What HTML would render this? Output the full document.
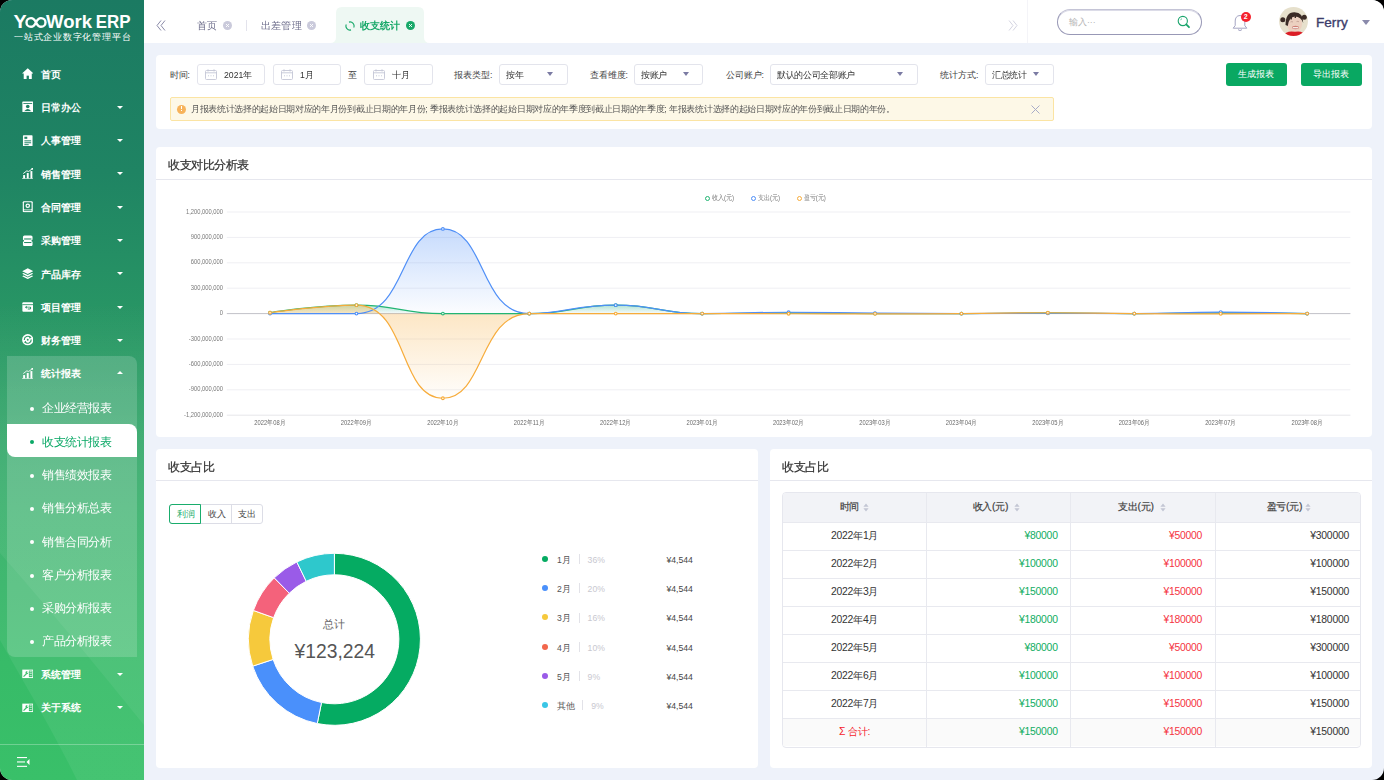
<!DOCTYPE html>
<html><head><meta charset="utf-8">
<style>
*{box-sizing:border-box;margin:0;padding:0}
html,body{width:1384px;height:780px;overflow:hidden;background:#000}
body{font-family:"Liberation Sans",sans-serif;color:#333}
.app{position:absolute;left:0;top:0;width:1384px;height:780px;border-radius:12px;overflow:hidden;background:#eef2fa}
.abs{position:absolute}
.t{position:absolute;white-space:nowrap;line-height:1}
/* sidebar */
.side{position:absolute;left:0;top:0;width:144px;height:780px;background:linear-gradient(180deg,#1b7a62 0%,#1f8463 22%,#2a9a65 45%,#31ad66 65%,#37bb68 85%,#39c069 100%);overflow:hidden}
.logo{position:absolute;left:14px;top:12.4px;font-size:19.4px;font-weight:bold;color:#fff;letter-spacing:-1.2px;line-height:1}
.sub{position:absolute;left:14px;top:32.5px;font-size:9.2px;color:#fff;letter-spacing:0.78px;line-height:1}
.mi{position:absolute;left:0;width:144px;height:33px}
.mi .ic{position:absolute;left:21.5px;top:10.6px;width:11.5px;height:11.5px}
.mi .lb{position:absolute;left:41px;top:12.3px;font-size:10.1px;color:#fff;font-weight:600;line-height:1;white-space:nowrap}
.mi .ar{position:absolute;left:117px;top:15px;width:0;height:0;border-left:3px solid transparent;border-right:3px solid transparent;border-top:3.5px solid #fff}
.mi .arup{border-top:none;border-bottom:3.5px solid #fff;top:14px}
.grp{position:absolute;left:7px;top:356px;width:130px;height:301px;background:rgba(255,255,255,0.17);border-radius:0 8px 0 8px}
.si{position:absolute;left:0;width:144px;height:33px}
.si .dot{position:absolute;left:30px;top:16.6px;width:4px;height:4px;border-radius:50%;background:#fff}
.si .lb{position:absolute;left:42px;top:11.9px;font-size:12px;transform:scale(0.965);transform-origin:0 0;color:#fff;line-height:1;white-space:nowrap}
.si.act .bg{position:absolute;left:7px;top:0.6px;width:130px;height:33px;background:#fff;border-radius:0 8px 0 8px}
.si.act .dot{background:#0aa866}
.si.act .lb{color:#0aa866}
/* header */
.hdr{position:absolute;left:144px;top:0;width:1240px;height:43px;background:#fff}
/* cards */
.card{position:absolute;background:#fff;border-radius:4px}
.ctitle{position:absolute;left:12px;font-size:12px;transform:scale(0.96);transform-origin:0 0;color:#333;-webkit-text-stroke:0.25px #333;line-height:1;white-space:nowrap}
.inp{position:absolute;top:64px;height:21px;border:1px solid #e3e4ec;border-radius:3px;background:#fff}
.lbl{position:absolute;top:70.5px;font-size:8.65px;color:#444;line-height:1;white-space:nowrap}
.itx{position:absolute;top:70.8px;font-size:9px;transform:scale(0.963);transform-origin:0 0;color:#333;line-height:1;white-space:nowrap}
.sar{position:absolute;top:72px;width:0;height:0;border-left:3.9px solid transparent;border-right:3.9px solid transparent;border-top:4.8px solid #7b7ba3}
.btn{position:absolute;top:63px;width:61px;height:23px;background:#09a862;border-radius:3px;color:#fff;font-size:8.65px;line-height:23px;text-align:center}
.yl{position:absolute;left:163px;width:60px;text-align:right;font-size:5.8px;color:#7a7a7a;line-height:8px;white-space:nowrap;transform:scaleY(1.3);transform-origin:right center}
.xl{position:absolute;top:417.8px;width:60px;text-align:center;font-size:5.8px;color:#6a6a6a;line-height:8px;white-space:nowrap;transform:scaleY(1.25)}
.lg{position:absolute;top:194.2px;font-size:6.1px;color:#7a7a7a;line-height:8px;white-space:nowrap;transform:scaleY(1.15)}
.lgd{position:absolute;top:195.8px;width:5px;height:5px;border-radius:50%;border:1.2px solid}
/* legend list */
.lr{position:absolute;left:542px;width:160px;height:14px}
.lr .d{position:absolute;left:0;top:3.3px;width:6px;height:6px;border-radius:50%}
.lr .m{position:absolute;left:15px;top:3.4px;font-size:8.65px;color:#555;line-height:1;white-space:nowrap}
.lr .s{position:absolute;top:1.6px;width:1px;height:10px;background:#e2e2e8}
.lr .p{position:absolute;top:3.4px;font-size:8.65px;color:#c8c8d0;line-height:1;white-space:nowrap}
.lr .v{position:absolute;right:10px;top:3.4px;font-size:8.65px;color:#444;line-height:1;white-space:nowrap}
/* table */
.tbl{position:absolute;left:782px;top:492.5px;width:579px;height:254px;border:1px solid #e6e7ee;border-radius:4px;overflow:hidden}
.th{position:absolute;top:0;height:28.8px;background:#f2f3f7}
.row{position:absolute;left:0;width:579px;height:28.1px;border-top:1px solid #e8e9ef}
.cell{position:absolute;top:0;height:28px;line-height:28px;font-size:10.4px;color:#333;white-space:nowrap;letter-spacing:-0.25px}
.vl{position:absolute;top:0;width:1px;height:256px;background:#e8e9ef}
</style></head>
<body><div class="app">

<!-- SIDEBAR -->
<div class="side">
  <svg class="abs" style="left:0;top:0" width="144" height="780"><defs><linearGradient id="sov" gradientUnits="userSpaceOnUse" x1="0" y1="300" x2="0" y2="780"><stop offset="0" stop-color="#fff" stop-opacity="0"/><stop offset="0.3" stop-color="#fff" stop-opacity="0.06"/><stop offset="1" stop-color="#fff" stop-opacity="0.06"/></linearGradient><linearGradient id="sov2" gradientUnits="userSpaceOnUse" x1="0" y1="300" x2="0" y2="780"><stop offset="0" stop-color="#fff" stop-opacity="0"/><stop offset="0.35" stop-color="#fff" stop-opacity="0.055"/><stop offset="1" stop-color="#fff" stop-opacity="0.055"/></linearGradient></defs>
<path d="M0,300 L0,640 C22,680 50,725 77,780 L144,780 L144,300 Z" fill="url(#sov)"/>
<path d="M0,300 L0,553 C50,610 100,670 144,725 L144,300 Z" fill="url(#sov2)"/></svg>
  <svg class="abs" style="left:0;top:0" width="144" height="44"><g fill="#fff" font-family="Liberation Sans, sans-serif" font-weight="bold" font-size="18.8">
<text x="13.6" y="27.8" textLength="13.2" lengthAdjust="spacingAndGlyphs">Y</text>
<text x="46" y="27.8" textLength="46" lengthAdjust="spacingAndGlyphs">Work</text>
<text x="95.8" y="27.8" textLength="34.8" lengthAdjust="spacingAndGlyphs">ERP</text></g>
<path d="M36,22.4 C37.4,19.4 38.8,18.1 41,18.1 C43.6,18.1 45.5,20 45.5,22.4 C45.5,24.8 43.6,26.8 41,26.8 C38.8,26.8 37.4,25.4 36,22.4 C34.6,19.4 33.2,18.1 31,18.1 C28.4,18.1 26.5,20 26.5,22.4 C26.5,24.8 28.4,26.8 31,26.8 C33.2,26.8 34.6,25.4 36,22.4 Z" stroke="#fff" stroke-width="2.4" fill="none"/></svg>
  <div class="sub">一站式企业数字化管理平台</div>
<div class="mi" style="top:57.5px"><svg class="ic" viewBox="0 0 12 12"><defs><mask id="mh"><rect width="12" height="12" fill="#000"/><path d="M6 0.2 L12 5.7 L10.2 5.7 L10.2 11.6 L1.8 11.6 L1.8 5.7 L0 5.7 Z" fill="#fff"/><rect x="4.8" y="8" width="2.4" height="3.8" fill="#000"/></mask></defs><rect width="12" height="12" fill="#fff" mask="url(#mh)"/></svg><div class="lb">首页</div></div>
<div class="mi" style="top:90.8px"><svg class="ic" viewBox="0 0 12 12"><defs><mask id="mo"><rect width="12" height="12" fill="#000"/><rect x="0.4" y="0.6" width="11.2" height="11" rx="0.6" fill="#fff"/><rect x="1.4" y="2.1" width="9.2" height="0.9" fill="#000"/><circle cx="6" cy="5.7" r="1.9" fill="#000"/><path d="M2.6 10.4 Q6 6.4 9.4 10.4 Z" fill="#000"/><rect x="2.2" y="10.4" width="7.6" height="0.2" fill="#000"/></mask></defs><rect width="12" height="12" fill="#fff" mask="url(#mo)"/></svg><div class="lb">日常办公</div><div class="ar"></div></div>
<div class="mi" style="top:124.1px"><svg class="ic" viewBox="0 0 12 12"><defs><mask id="mr"><rect width="12" height="12" fill="#000"/><rect x="1" y="0.2" width="10" height="11.6" rx="0.8" fill="#fff"/><rect x="2.5" y="1.8" width="3" height="2.2" fill="#000"/><rect x="2.5" y="5.6" width="7" height="1" fill="#000"/><rect x="2.5" y="7.6" width="7" height="1" fill="#000"/><rect x="2.5" y="9.6" width="4.5" height="1" fill="#000"/></mask></defs><rect width="12" height="12" fill="#fff" mask="url(#mr)"/></svg><div class="lb">人事管理</div><div class="ar"></div></div>
<div class="mi" style="top:157.4px"><svg class="ic" viewBox="0 0 12 12"><defs><mask id="ms"><rect width="12" height="12" fill="#000"/><rect x="0" y="10.9" width="12" height="1.1" fill="#fff"/><rect x="1.2" y="7.4" width="2" height="3.5" fill="#fff"/><rect x="5" y="5.2" width="2" height="5.7" fill="#fff"/><rect x="8.8" y="3.2" width="2" height="7.7" fill="#fff"/><path d="M1.3 5.8 L5 3 L7 3.6 L10.6 0.9" stroke="#fff" stroke-width="1" fill="none"/><circle cx="10.8" cy="0.9" r="1" fill="#fff"/></mask></defs><rect width="12" height="12" fill="#fff" mask="url(#ms)"/></svg><div class="lb">销售管理</div><div class="ar"></div></div>
<div class="mi" style="top:190.7px"><svg class="ic" viewBox="0 0 12 12"><defs><mask id="mc"><rect width="12" height="12" fill="#000"/><rect x="0.8" y="0.2" width="10.4" height="11.6" rx="1.2" fill="#fff"/><rect x="2" y="1.4" width="8" height="7.4" rx="0.6" fill="#000"/><rect x="2" y="9.7" width="8" height="0.8" fill="#000"/><circle cx="6" cy="5" r="2.4" fill="#fff"/><circle cx="6" cy="5" r="1.1" fill="#000"/></mask></defs><rect width="12" height="12" fill="#fff" mask="url(#mc)"/></svg><div class="lb">合同管理</div><div class="ar"></div></div>
<div class="mi" style="top:224.0px"><svg class="ic" viewBox="0 0 12 12"><defs><mask id="mp"><rect width="12" height="12" fill="#000"/><rect x="1" y="0.4" width="10" height="11.2" rx="1.6" fill="#fff"/><rect x="2.2" y="3.6" width="7.6" height="1.1" fill="#000"/><rect x="2.2" y="7.3" width="7.6" height="1.1" fill="#000"/><circle cx="11" cy="6" r="1.1" fill="#000"/><circle cx="1" cy="6" r="1.1" fill="#000"/></mask></defs><rect width="12" height="12" fill="#fff" mask="url(#mp)"/></svg><div class="lb">采购管理</div><div class="ar"></div></div>
<div class="mi" style="top:257.3px"><svg class="ic" viewBox="0 0 12 12"><defs><mask id="mk"><rect width="12" height="12" fill="#000"/><path d="M6 0.3 L11.8 3.3 L6 6.3 L0.2 3.3 Z" fill="#fff"/><path d="M0.2 5.9 L1.6 5.1 L6 7.4 L10.4 5.1 L11.8 5.9 L6 9 Z" fill="#fff"/><path d="M0.2 8.5 L1.6 7.7 L6 10 L10.4 7.7 L11.8 8.5 L6 11.6 Z" fill="#fff"/></mask></defs><rect width="12" height="12" fill="#fff" mask="url(#mk)"/></svg><div class="lb">产品库存</div><div class="ar"></div></div>
<div class="mi" style="top:290.6px"><svg class="ic" viewBox="0 0 12 12"><defs><mask id="mj"><rect width="12" height="12" fill="#000"/><rect x="0.4" y="1.3" width="11.2" height="9.8" rx="1" fill="#fff"/><rect x="0.4" y="3.4" width="11.2" height="0.9" fill="#000"/><path d="M3 6.6 L5 5 L5 6 L8.4 6 Q9.6 6 9.6 7.4 Q9.6 8.8 8.4 8.8 L6 8.8 L6 7.9 L8.2 7.9 Q8.6 7.9 8.6 7.4 Q8.6 6.9 8.2 6.9 L5 6.9 L5 8.1 Z" fill="#000"/></mask></defs><rect width="12" height="12" fill="#fff" mask="url(#mj)"/></svg><div class="lb">项目管理</div><div class="ar"></div></div>
<div class="mi" style="top:323.9px"><svg class="ic" viewBox="0 0 12 12"><defs><mask id="mf"><rect width="12" height="12" fill="#000"/><circle cx="6" cy="6" r="5.9" fill="#fff"/><path d="M2.4 6.2 A3.6 3.6 0 0 1 8.7 3.6" stroke="#000" stroke-width="1.2" fill="none"/><path d="M9.6 5.8 A3.6 3.6 0 0 1 3.3 8.4" stroke="#000" stroke-width="1.2" fill="none"/><path d="M7.4 2.2 L10 3.4 L7.9 5 Z" fill="#000"/><path d="M4.6 9.8 L2 8.6 L4.1 7 Z" fill="#000"/><circle cx="6" cy="6" r="1" fill="#000"/></mask></defs><rect width="12" height="12" fill="#fff" mask="url(#mf)"/></svg><div class="lb">财务管理</div><div class="ar"></div></div>
<div class="grp"></div>
<div class="mi" style="top:357.2px"><svg class="ic" viewBox="0 0 12 12"><defs><mask id="mt"><rect width="12" height="12" fill="#000"/><rect x="0" y="10.9" width="12" height="1.1" fill="#fff"/><rect x="1.2" y="7.4" width="2" height="3.5" fill="#fff"/><rect x="5" y="5.2" width="2" height="5.7" fill="#fff"/><rect x="8.8" y="3.2" width="2" height="7.7" fill="#fff"/><path d="M1.3 5.8 L5 3 L7 3.6 L10.6 0.9" stroke="#fff" stroke-width="0.9" fill="none"/><circle cx="10.8" cy="0.9" r="1" fill="#fff"/></mask></defs><rect width="12" height="12" fill="#fff" mask="url(#mt)"/></svg><div class="lb">统计报表</div><div class="ar arup"></div></div>
<div class="si" style="top:390.5px"><div class="dot"></div><div class="lb">企业经营报表</div></div>
<div class="si act" style="top:423.8px"><div class="bg"></div><div class="dot"></div><div class="lb">收支统计报表</div></div>
<div class="si" style="top:457.1px"><div class="dot"></div><div class="lb">销售绩效报表</div></div>
<div class="si" style="top:490.4px"><div class="dot"></div><div class="lb">销售分析总表</div></div>
<div class="si" style="top:523.7px"><div class="dot"></div><div class="lb">销售合同分析</div></div>
<div class="si" style="top:557.0px"><div class="dot"></div><div class="lb">客户分析报表</div></div>
<div class="si" style="top:590.3px"><div class="dot"></div><div class="lb">采购分析报表</div></div>
<div class="si" style="top:623.6px"><div class="dot"></div><div class="lb">产品分析报表</div></div>
<div class="mi" style="top:657.8px"><svg class="ic" viewBox="0 0 12 12"><defs><mask id="my0"><rect width="12" height="12" fill="#000"/><rect x="0.3" y="1.7" width="11.4" height="8.8" fill="#fff"/><rect x="7.2" y="2.7" width="3.6" height="6.8" fill="#000"/><path d="M1.6 9 L4.6 6" stroke="#000" stroke-width="1.2"/><circle cx="5.1" cy="5" r="1.5" fill="#000"/><path d="M4.8 3.6 L6.2 3.6 L6.2 5" stroke="#fff" stroke-width="0"/><rect x="7.8" y="3.6" width="2.4" height="0.8" fill="#fff"/><rect x="7.8" y="5.6" width="2.4" height="0.6" fill="#fff"/><rect x="7.8" y="7.4" width="2.4" height="0.6" fill="#fff"/><circle cx="5.9" cy="4.3" r="0.8" fill="#fff"/></mask></defs><rect width="12" height="12" fill="#fff" mask="url(#my0)"/></svg><div class="lb">系统管理</div><div class="ar"></div></div>
<div class="mi" style="top:691.1px"><svg class="ic" viewBox="0 0 12 12"><defs><mask id="my1"><rect width="12" height="12" fill="#000"/><rect x="0.3" y="1.7" width="11.4" height="8.8" fill="#fff"/><rect x="7.2" y="2.7" width="3.6" height="6.8" fill="#000"/><path d="M1.6 9 L4.6 6" stroke="#000" stroke-width="1.2"/><circle cx="5.1" cy="5" r="1.5" fill="#000"/><path d="M4.8 3.6 L6.2 3.6 L6.2 5" stroke="#fff" stroke-width="0"/><rect x="7.8" y="3.6" width="2.4" height="0.8" fill="#fff"/><rect x="7.8" y="5.6" width="2.4" height="0.6" fill="#fff"/><rect x="7.8" y="7.4" width="2.4" height="0.6" fill="#fff"/><circle cx="5.9" cy="4.3" r="0.8" fill="#fff"/></mask></defs><rect width="12" height="12" fill="#fff" mask="url(#my1)"/></svg><div class="lb">关于系统</div><div class="ar"></div></div>
<div class="abs" style="left:0;top:744px;width:144px;height:1px;background:rgba(255,255,255,0.28)"></div>
<svg class="abs" style="left:16px;top:756px" width="16" height="12" viewBox="0 0 16 12"><rect x="1" y="1" width="10" height="1.1" fill="#fff"/><rect x="1" y="5.4" width="8" height="1.1" fill="#fff"/><rect x="1" y="9.8" width="10" height="1.1" fill="#fff"/><path d="M13.5 3 L10.5 6 L13.5 9Z" fill="#fff"/></svg>
</div>

<!-- HEADER -->

<div class="hdr">
  <svg class="abs" style="left:12px;top:20px" width="10" height="11" viewBox="0 0 10 11"><path d="M5 0.5 L1 5.5 L5 10.5 M9 0.5 L5 5.5 L9 10.5" stroke="#8a8aa8" stroke-width="1" fill="none"/></svg>
  <div class="t" style="left:53px;top:20.6px;font-size:11px;color:#6e6e8c;transform:scale(0.91);transform-origin:0 0">首页</div>
  <div class="abs" style="left:78.5px;top:20.5px;width:9px;height:9px;border-radius:50%;background:#cacadb"></div>
  <svg class="abs" style="left:78.5px;top:20.5px" width="9" height="9"><path d="M3 3 L6 6 M6 3 L3 6" stroke="#fff" stroke-width="0.9"/></svg>
  <div class="abs" style="left:102px;top:19.5px;width:1px;height:11px;background:#e3e3ec"></div>
  <div class="t" style="left:116.8px;top:20.6px;font-size:11px;color:#6e6e8c;transform:scale(0.93);transform-origin:0 0">出差管理</div>
  <div class="abs" style="left:163px;top:20.5px;width:9px;height:9px;border-radius:50%;background:#cacadb"></div>
  <svg class="abs" style="left:163px;top:20.5px" width="9" height="9"><path d="M3 3 L6 6 M6 3 L3 6" stroke="#fff" stroke-width="0.9"/></svg>
  <svg class="abs" style="left:186px;top:7px" width="100" height="36" viewBox="0 0 100 36"><path d="M0 36 Q6 36 6 30 L6 6 Q6 0 12 0 L88 0 Q94 0 94 6 L94 30 Q94 36 100 36 Z" fill="#eef8f3"/></svg>
  <svg class="abs" style="left:200.5px;top:20.5px" width="10" height="10" viewBox="0 0 10 10"><path d="M4 1.1 A4 4 0 0 1 8.7 6.6" stroke="#17a868" stroke-width="1.1" fill="none"/><path d="M6 8.9 A4 4 0 0 1 1.3 3.4" stroke="#17a868" stroke-width="1.1" fill="none"/></svg>
  <div class="t" style="left:216px;top:20.6px;font-size:11px;color:#17a868;font-weight:bold;transform:scale(0.91);transform-origin:0 0">收支统计</div>
  <div class="abs" style="left:262px;top:20.5px;width:9px;height:9px;border-radius:50%;background:#17a868"></div>
  <svg class="abs" style="left:262px;top:20.5px" width="9" height="9"><path d="M3 3 L6 6 M6 3 L3 6" stroke="#fff" stroke-width="0.9"/></svg>
  <svg class="abs" style="left:864px;top:20px" width="10" height="11" viewBox="0 0 10 11"><path d="M1 0.5 L5 5.5 L1 10.5 M5 0.5 L9 5.5 L5 10.5" stroke="#d4d4e2" stroke-width="1" fill="none"/></svg>
  <div class="abs" style="left:883px;top:0;width:1px;height:43px;background:#f4f4f8"></div>
  <div class="abs" style="left:913px;top:8.8px;width:145px;height:26px;border:1px solid #9898b6;border-top-color:#c4c4d6;border-radius:13px;box-shadow:inset 0 1px 0 #dcdce8"></div>
  <div class="t" style="left:925px;top:18px;font-size:8.65px;color:#b4b4b4">输入···</div>
  <svg class="abs" style="left:1033px;top:15px" width="14" height="14" viewBox="0 0 14 14"><circle cx="5.8" cy="6" r="4.6" stroke="#1aa56c" stroke-width="1.1" fill="none"/><path d="M9.2 9.4 L12 12.2" stroke="#1aa56c" stroke-width="1.8" stroke-linecap="round"/><path d="M3.5 5.2 A2.4 2.4 0 0 1 5 3.6" stroke="#1aa56c" stroke-width="0.6" fill="none"/></svg>
  <svg class="abs" style="left:1088px;top:14px" width="16" height="18" viewBox="0 0 16 18"><path d="M8 1.5 C4.6 1.5 3.2 4.2 3.2 7 L3.2 11.6 L1.2 14.2 L14.8 14.2 L12.8 11.6 L12.8 7 C12.8 4.2 11.4 1.5 8 1.5 Z" stroke="#a4a4c2" stroke-width="1" fill="none"/><path d="M6 15.6 Q8 17.6 10 15.6" stroke="#a4a4c2" stroke-width="1" fill="none"/></svg>
  <div class="abs" style="left:1096.5px;top:11.5px;width:10.5px;height:10.5px;border-radius:50%;background:#f5222d;color:#fff;font-size:7px;line-height:10.5px;text-align:center;font-weight:bold">2</div>
  <svg class="abs" style="left:1135px;top:7px" width="29" height="29" viewBox="0 0 29 29"><defs><clipPath id="av"><circle cx="14.5" cy="14.5" r="14.4"/></clipPath></defs><g clip-path="url(#av)"><rect width="29" height="29" fill="#e6e0cc"/><ellipse cx="15.5" cy="17" rx="7.6" ry="8.6" fill="#ecd0c0"/><path d="M6.5 18 Q6.5 5 15.5 5.2 Q24.5 5.4 24.2 16 Q22 10 16 9.6 Q10 9.8 8.8 19 Z" fill="#3b2b26"/><path d="M12 6 L11.4 12.5 L12.8 12.5 L13.6 6.5Z M15.8 6 L15.6 11 L17 11 L17 6Z" fill="#3b2b26"/><circle cx="3.8" cy="12.8" r="2.5" fill="#3b2b26"/><circle cx="25.3" cy="10.3" r="2.5" fill="#3b2b26"/><path d="M11.5 15 Q13 14.3 14 15 M17.5 14.6 Q19 14 20 14.8" stroke="#b08a80" stroke-width="0.6" fill="none"/><ellipse cx="16.5" cy="20.5" rx="3.4" ry="1.7" fill="#cf8078"/><rect x="13.8" y="20" width="5.4" height="1.3" fill="#f2ece6"/><path d="M3.5 29.5 Q7 23 16 24.8 Q24 23 27.5 29.5Z" fill="#dc1d26"/></g></svg>
  <div class="t" style="left:1172px;top:16px;font-size:13.6px;color:#3d3d6b;-webkit-text-stroke:0.35px #3d3d6b">Ferry</div>
  <div class="abs" style="left:1218px;top:19.5px;width:0;height:0;border-left:4px solid transparent;border-right:4px solid transparent;border-top:5px solid #8a8aab"></div>
</div>


<!-- FILTER CARD -->

<div class="card" style="left:156px;top:55px;width:1216px;height:74px"></div>
<div class="lbl" style="left:169.5px">时间:</div>
<div class="inp" style="left:196.5px;width:68.5px"></div><svg class="abs" style="left:205.0px;top:69px" width="12" height="11" viewBox="0 0 12 11"><rect x="0.5" y="1.5" width="11" height="9" rx="1" stroke="#c4c6d6" stroke-width="0.9" fill="none"/><path d="M0.5 3.8 L11.5 3.8" stroke="#c4c6d6" stroke-width="0.9"/><path d="M3 0.3 L3 2.5 M9 0.3 L9 2.5" stroke="#c4c6d6" stroke-width="0.9"/><path d="M3 6.8 L4 6.8 M5.5 6.8 L6.5 6.8 M8 6.8 L9 6.8" stroke="#c4c6d6" stroke-width="0.9"/></svg><div class="itx" style="left:224px">2021年</div>
<div class="inp" style="left:272.5px;width:68.5px"></div><svg class="abs" style="left:281.0px;top:69px" width="12" height="11" viewBox="0 0 12 11"><rect x="0.5" y="1.5" width="11" height="9" rx="1" stroke="#c4c6d6" stroke-width="0.9" fill="none"/><path d="M0.5 3.8 L11.5 3.8" stroke="#c4c6d6" stroke-width="0.9"/><path d="M3 0.3 L3 2.5 M9 0.3 L9 2.5" stroke="#c4c6d6" stroke-width="0.9"/><path d="M3 6.8 L4 6.8 M5.5 6.8 L6.5 6.8 M8 6.8 L9 6.8" stroke="#c4c6d6" stroke-width="0.9"/></svg><div class="itx" style="left:300px">1月</div>
<div class="lbl" style="left:348px">至</div>
<div class="inp" style="left:363.5px;width:69px"></div><svg class="abs" style="left:372.5px;top:69px" width="12" height="11" viewBox="0 0 12 11"><rect x="0.5" y="1.5" width="11" height="9" rx="1" stroke="#c4c6d6" stroke-width="0.9" fill="none"/><path d="M0.5 3.8 L11.5 3.8" stroke="#c4c6d6" stroke-width="0.9"/><path d="M3 0.3 L3 2.5 M9 0.3 L9 2.5" stroke="#c4c6d6" stroke-width="0.9"/><path d="M3 6.8 L4 6.8 M5.5 6.8 L6.5 6.8 M8 6.8 L9 6.8" stroke="#c4c6d6" stroke-width="0.9"/></svg><div class="itx" style="left:391.5px">十月</div>
<div class="lbl" style="left:454px">报表类型:</div>
<div class="inp" style="left:498.5px;width:69px"></div><div class="itx" style="left:505.5px">按年</div><div class="sar" style="left:547px"></div>
<div class="lbl" style="left:589.5px">查看维度:</div>
<div class="inp" style="left:634px;width:69px"></div><div class="itx" style="left:641px">按账户</div><div class="sar" style="left:683px"></div>
<div class="lbl" style="left:725.5px">公司账户:</div>
<div class="inp" style="left:769.5px;width:148.5px"></div><div class="itx" style="left:776.5px">默认的公司全部账户</div><div class="sar" style="left:897px"></div>
<div class="lbl" style="left:940px">统计方式:</div>
<div class="inp" style="left:984.5px;width:69px"></div><div class="itx" style="left:991.5px">汇总统计</div><div class="sar" style="left:1033px"></div>
<div class="btn" style="left:1225.5px">生成报表</div>
<div class="btn" style="left:1300.5px">导出报表</div>
<div class="abs" style="left:169.5px;top:97px;width:884.5px;height:24px;background:#fdf8e7;border:1px solid #fbe4a3;border-radius:2px"></div>
<div class="abs" style="left:176.5px;top:104.5px;width:9px;height:9px;border-radius:50%;background:#f7b35b"></div>
<div class="abs" style="left:180.5px;top:106.3px;width:1px;height:3.2px;background:#fff"></div><div class="abs" style="left:180.5px;top:110.4px;width:1px;height:1px;background:#fff"></div>
<div class="t" style="left:191px;top:104.5px;font-size:9px;color:#555;transform:scale(0.964);transform-origin:0 0">月报表统计选择的起始日期对应的年月份到截止日期的年月份; 季报表统计选择的起始日期对应的年季度到截止日期的年季度; 年报表统计选择的起始日期对应的年份到截止日期的年份。</div>
<svg class="abs" style="left:1031px;top:105px" width="9" height="9" viewBox="0 0 9 9"><path d="M0.5 0.5 L8.5 8.5 M8.5 0.5 L0.5 8.5" stroke="#a8acc8" stroke-width="1"/></svg>


<!-- CHART CARD -->
<div class="card" style="left:156px;top:147px;width:1216px;height:290px">
  <div class="ctitle" style="top:12.3px">收支对比分析表</div>
  <div class="abs" style="left:0;top:32px;width:1216px;height:1px;background:#e6e7ee"></div>
</div>
<svg width="1384" height="780" style="position:absolute;left:0;top:0">
<defs>
<linearGradient id="gG" x1="0" y1="0" x2="0" y2="1"><stop offset="0" stop-color="#22b573" stop-opacity="0.32"/><stop offset="1" stop-color="#22b573" stop-opacity="0.02"/></linearGradient>
<linearGradient id="gB" x1="0" y1="0" x2="0" y2="1"><stop offset="0" stop-color="#4f8ff7" stop-opacity="0.32"/><stop offset="1" stop-color="#4f8ff7" stop-opacity="0.02"/></linearGradient>
<linearGradient id="gO" x1="0" y1="0" x2="0" y2="1"><stop offset="0" stop-color="#f7ac3b" stop-opacity="0.32"/><stop offset="1" stop-color="#f7ac3b" stop-opacity="0.02"/></linearGradient>
</defs>
<line x1="226.8" y1="212.00" x2="1350.4" y2="212.00" stroke="#efeff3" stroke-width="1"/>
<line x1="226.8" y1="237.40" x2="1350.4" y2="237.40" stroke="#efeff3" stroke-width="1"/>
<line x1="226.8" y1="262.80" x2="1350.4" y2="262.80" stroke="#efeff3" stroke-width="1"/>
<line x1="226.8" y1="288.20" x2="1350.4" y2="288.20" stroke="#efeff3" stroke-width="1"/>
<line x1="226.8" y1="339.00" x2="1350.4" y2="339.00" stroke="#efeff3" stroke-width="1"/>
<line x1="226.8" y1="364.40" x2="1350.4" y2="364.40" stroke="#efeff3" stroke-width="1"/>
<line x1="226.8" y1="389.80" x2="1350.4" y2="389.80" stroke="#efeff3" stroke-width="1"/>
<line x1="226.8" y1="415.20" x2="1350.4" y2="415.20" stroke="#e6e6ea" stroke-width="1"/>
<line x1="226.8" y1="313.60" x2="1350.4" y2="313.60" stroke="#c2c2c8" stroke-width="1"/>
<path d="M270.02,312.75 C270.02,312.75 313.25,305.13 356.45,305.13 C399.68,305.13 399.56,313.60 442.88,313.60 C485.99,313.60 486.20,313.60 529.31,313.60 C572.63,313.60 572.52,305.13 615.74,305.13 C658.95,305.13 658.85,313.60 702.17,313.60 C745.28,313.60 745.38,312.92 788.60,312.92 C831.82,312.92 831.81,313.60 875.03,313.60 C918.25,313.60 918.25,313.60 961.46,313.60 C1004.68,313.60 1004.68,312.92 1047.89,312.92 C1091.11,312.92 1091.11,313.60 1134.32,313.60 C1177.54,313.60 1177.54,312.92 1220.75,312.92 C1263.97,312.92 1307.18,313.60 1307.18,313.60 L1307.18,313.60 L270.02,313.60 Z" fill="url(#gG)"/>
<path d="M270.02,313.60 C270.02,313.60 320.43,313.60 356.45,313.60 C406.86,313.60 399.66,228.93 442.88,228.93 C486.09,228.93 478.99,313.60 529.31,313.60 C565.42,313.60 572.52,305.13 615.74,305.13 C658.95,305.13 658.85,313.60 702.17,313.60 C745.28,313.60 745.38,312.25 788.60,312.25 C831.81,312.25 831.81,312.75 875.03,313.09 C918.25,313.43 918.25,313.60 961.46,313.60 C1004.68,313.60 1004.68,313.26 1047.89,313.26 C1091.11,313.26 1091.11,313.60 1134.32,313.60 C1177.54,313.60 1177.54,312.08 1220.75,312.08 C1263.97,312.08 1307.18,313.60 1307.18,313.60 L1307.18,313.60 L270.02,313.60 Z" fill="url(#gB)"/>
<path d="M270.02,312.75 C270.02,312.75 321.37,305.13 356.45,305.13 C407.81,305.13 398.60,398.27 442.88,398.27 C485.03,398.27 478.89,313.60 529.31,313.60 C565.32,313.60 572.52,313.60 615.74,313.60 C658.95,313.60 658.95,313.60 702.17,313.60 C745.38,313.60 745.38,313.71 788.60,313.77 C831.82,313.83 831.82,313.85 875.03,313.85 C918.25,313.85 918.25,313.85 961.46,313.60 C1004.68,313.35 1004.68,312.75 1047.89,312.75 C1091.11,312.75 1091.11,313.35 1134.32,313.60 C1177.54,313.85 1177.54,313.85 1220.75,313.85 C1263.97,313.85 1307.18,313.60 1307.18,313.60 L1307.18,313.60 L270.02,313.60 Z" fill="url(#gO)"/>
<path d="M270.02,312.75 C270.02,312.75 313.25,305.13 356.45,305.13 C399.68,305.13 399.56,313.60 442.88,313.60 C485.99,313.60 486.20,313.60 529.31,313.60 C572.63,313.60 572.52,305.13 615.74,305.13 C658.95,305.13 658.85,313.60 702.17,313.60 C745.28,313.60 745.38,312.92 788.60,312.92 C831.82,312.92 831.81,313.60 875.03,313.60 C918.25,313.60 918.25,313.60 961.46,313.60 C1004.68,313.60 1004.68,312.92 1047.89,312.92 C1091.11,312.92 1091.11,313.60 1134.32,313.60 C1177.54,313.60 1177.54,312.92 1220.75,312.92 C1263.97,312.92 1307.18,313.60 1307.18,313.60" fill="none" stroke="#22b573" stroke-width="1.2"/>
<path d="M270.02,313.60 C270.02,313.60 320.43,313.60 356.45,313.60 C406.86,313.60 399.66,228.93 442.88,228.93 C486.09,228.93 478.99,313.60 529.31,313.60 C565.42,313.60 572.52,305.13 615.74,305.13 C658.95,305.13 658.85,313.60 702.17,313.60 C745.28,313.60 745.38,312.25 788.60,312.25 C831.81,312.25 831.81,312.75 875.03,313.09 C918.25,313.43 918.25,313.60 961.46,313.60 C1004.68,313.60 1004.68,313.26 1047.89,313.26 C1091.11,313.26 1091.11,313.60 1134.32,313.60 C1177.54,313.60 1177.54,312.08 1220.75,312.08 C1263.97,312.08 1307.18,313.60 1307.18,313.60" fill="none" stroke="#4f8ff7" stroke-width="1.2"/>
<path d="M270.02,312.75 C270.02,312.75 321.37,305.13 356.45,305.13 C407.81,305.13 398.60,398.27 442.88,398.27 C485.03,398.27 478.89,313.60 529.31,313.60 C565.32,313.60 572.52,313.60 615.74,313.60 C658.95,313.60 658.95,313.60 702.17,313.60 C745.38,313.60 745.38,313.71 788.60,313.77 C831.82,313.83 831.82,313.85 875.03,313.85 C918.25,313.85 918.25,313.85 961.46,313.60 C1004.68,313.35 1004.68,312.75 1047.89,312.75 C1091.11,312.75 1091.11,313.35 1134.32,313.60 C1177.54,313.85 1177.54,313.85 1220.75,313.85 C1263.97,313.85 1307.18,313.60 1307.18,313.60" fill="none" stroke="#f7ac3b" stroke-width="1.2"/>
<circle cx="270.02" cy="312.75" r="1.35" fill="#fff" stroke="#22b573" stroke-width="1.1"/><circle cx="356.45" cy="305.13" r="1.35" fill="#fff" stroke="#22b573" stroke-width="1.1"/><circle cx="442.88" cy="313.60" r="1.35" fill="#fff" stroke="#22b573" stroke-width="1.1"/><circle cx="529.31" cy="313.60" r="1.35" fill="#fff" stroke="#22b573" stroke-width="1.1"/><circle cx="615.74" cy="305.13" r="1.35" fill="#fff" stroke="#22b573" stroke-width="1.1"/><circle cx="702.17" cy="313.60" r="1.35" fill="#fff" stroke="#22b573" stroke-width="1.1"/><circle cx="788.60" cy="312.92" r="1.35" fill="#fff" stroke="#22b573" stroke-width="1.1"/><circle cx="875.03" cy="313.60" r="1.35" fill="#fff" stroke="#22b573" stroke-width="1.1"/><circle cx="961.46" cy="313.60" r="1.35" fill="#fff" stroke="#22b573" stroke-width="1.1"/><circle cx="1047.89" cy="312.92" r="1.35" fill="#fff" stroke="#22b573" stroke-width="1.1"/><circle cx="1134.32" cy="313.60" r="1.35" fill="#fff" stroke="#22b573" stroke-width="1.1"/><circle cx="1220.75" cy="312.92" r="1.35" fill="#fff" stroke="#22b573" stroke-width="1.1"/><circle cx="1307.18" cy="313.60" r="1.35" fill="#fff" stroke="#22b573" stroke-width="1.1"/>
<circle cx="270.02" cy="313.60" r="1.35" fill="#fff" stroke="#4f8ff7" stroke-width="1.1"/><circle cx="356.45" cy="313.60" r="1.35" fill="#fff" stroke="#4f8ff7" stroke-width="1.1"/><circle cx="442.88" cy="228.93" r="1.35" fill="#fff" stroke="#4f8ff7" stroke-width="1.1"/><circle cx="529.31" cy="313.60" r="1.35" fill="#fff" stroke="#4f8ff7" stroke-width="1.1"/><circle cx="615.74" cy="305.13" r="1.35" fill="#fff" stroke="#4f8ff7" stroke-width="1.1"/><circle cx="702.17" cy="313.60" r="1.35" fill="#fff" stroke="#4f8ff7" stroke-width="1.1"/><circle cx="788.60" cy="312.25" r="1.35" fill="#fff" stroke="#4f8ff7" stroke-width="1.1"/><circle cx="875.03" cy="313.09" r="1.35" fill="#fff" stroke="#4f8ff7" stroke-width="1.1"/><circle cx="961.46" cy="313.60" r="1.35" fill="#fff" stroke="#4f8ff7" stroke-width="1.1"/><circle cx="1047.89" cy="313.26" r="1.35" fill="#fff" stroke="#4f8ff7" stroke-width="1.1"/><circle cx="1134.32" cy="313.60" r="1.35" fill="#fff" stroke="#4f8ff7" stroke-width="1.1"/><circle cx="1220.75" cy="312.08" r="1.35" fill="#fff" stroke="#4f8ff7" stroke-width="1.1"/><circle cx="1307.18" cy="313.60" r="1.35" fill="#fff" stroke="#4f8ff7" stroke-width="1.1"/>
<circle cx="270.02" cy="312.75" r="1.35" fill="#fff" stroke="#f7ac3b" stroke-width="1.1"/><circle cx="356.45" cy="305.13" r="1.35" fill="#fff" stroke="#f7ac3b" stroke-width="1.1"/><circle cx="442.88" cy="398.27" r="1.35" fill="#fff" stroke="#f7ac3b" stroke-width="1.1"/><circle cx="529.31" cy="313.60" r="1.35" fill="#fff" stroke="#f7ac3b" stroke-width="1.1"/><circle cx="615.74" cy="313.60" r="1.35" fill="#fff" stroke="#f7ac3b" stroke-width="1.1"/><circle cx="702.17" cy="313.60" r="1.35" fill="#fff" stroke="#f7ac3b" stroke-width="1.1"/><circle cx="788.60" cy="313.77" r="1.35" fill="#fff" stroke="#f7ac3b" stroke-width="1.1"/><circle cx="875.03" cy="313.85" r="1.35" fill="#fff" stroke="#f7ac3b" stroke-width="1.1"/><circle cx="961.46" cy="313.60" r="1.35" fill="#fff" stroke="#f7ac3b" stroke-width="1.1"/><circle cx="1047.89" cy="312.75" r="1.35" fill="#fff" stroke="#f7ac3b" stroke-width="1.1"/><circle cx="1134.32" cy="313.60" r="1.35" fill="#fff" stroke="#f7ac3b" stroke-width="1.1"/><circle cx="1220.75" cy="313.85" r="1.35" fill="#fff" stroke="#f7ac3b" stroke-width="1.1"/><circle cx="1307.18" cy="313.60" r="1.35" fill="#fff" stroke="#f7ac3b" stroke-width="1.1"/>
</svg>
<div class="yl" style="top:206.6px">1,200,000,000</div><div class="yl" style="top:232.0px">900,000,000</div><div class="yl" style="top:257.4px">600,000,000</div><div class="yl" style="top:282.8px">300,000,000</div><div class="yl" style="top:308.2px">0</div><div class="yl" style="top:333.6px">-300,000,000</div><div class="yl" style="top:359.0px">-600,000,000</div><div class="yl" style="top:384.4px">-900,000,000</div><div class="yl" style="top:409.8px">-1,200,000,000</div>
<div class="xl" style="left:240.0px">2022年08月</div><div class="xl" style="left:326.4px">2022年09月</div><div class="xl" style="left:412.9px">2022年10月</div><div class="xl" style="left:499.3px">2022年11月</div><div class="xl" style="left:585.7px">2022年12月</div><div class="xl" style="left:672.2px">2023年01月</div><div class="xl" style="left:758.6px">2023年02月</div><div class="xl" style="left:845.0px">2023年03月</div><div class="xl" style="left:931.5px">2023年04月</div><div class="xl" style="left:1017.9px">2023年05月</div><div class="xl" style="left:1104.3px">2023年06月</div><div class="xl" style="left:1190.8px">2023年07月</div><div class="xl" style="left:1277.2px">2023年08月</div>
<div class="lgd" style="left:705px;border-color:#22b573"></div><div class="lg" style="left:712px">收入(元)</div>
<div class="lgd" style="left:750.8px;border-color:#4f8ff7"></div><div class="lg" style="left:758px">支出(元)</div>
<div class="lgd" style="left:796.6px;border-color:#f7ac3b"></div><div class="lg" style="left:803.7px">盈亏(元)</div>


<!-- BOTTOM LEFT -->
<div class="card" style="left:156px;top:449px;width:602px;height:319px">
  <div class="ctitle" style="top:12.2px">收支占比</div>
  <div class="abs" style="left:0;top:31px;width:602px;height:1px;background:#e6e7ee"></div>
</div>
<svg width="1384" height="780" style="position:absolute;left:0;top:0">
<path d="M334.40,553.30 A86.0,86.0 0 1 1 317.25,723.57 L321.54,702.51 A64.5,64.5 0 1 0 334.40,574.80 Z" fill="#05ab62" stroke="#fff" stroke-width="1"/>
<path d="M317.25,723.57 A86.0,86.0 0 0 1 252.70,666.16 L273.13,659.45 A64.5,64.5 0 0 0 321.54,702.51 Z" fill="#4a90fb" stroke="#fff" stroke-width="1"/>
<path d="M252.70,666.16 A86.0,86.0 0 0 1 253.38,610.45 L273.64,617.66 A64.5,64.5 0 0 0 273.13,659.45 Z" fill="#f6c93c" stroke="#fff" stroke-width="1"/>
<path d="M253.38,610.45 A86.0,86.0 0 0 1 274.23,577.86 L289.27,593.22 A64.5,64.5 0 0 0 273.64,617.66 Z" fill="#f4627b" stroke="#fff" stroke-width="1"/>
<path d="M274.23,577.86 A86.0,86.0 0 0 1 296.84,561.94 L306.23,581.28 A64.5,64.5 0 0 0 289.27,593.22 Z" fill="#9a5be8" stroke="#fff" stroke-width="1"/>
<path d="M296.84,561.94 A86.0,86.0 0 0 1 334.40,553.30 L334.40,574.80 A64.5,64.5 0 0 0 306.23,581.28 Z" fill="#2ec8cc" stroke="#fff" stroke-width="1"/>
</svg>
<div class="abs" style="left:169px;top:504px;width:94px;height:20px;border:1px solid #dcdde6;border-radius:3px"></div>
<div class="abs" style="left:169px;top:504px;width:32px;height:20px;border:1px solid #19ad6c;border-radius:3px 0 0 3px"></div>
<div class="abs" style="left:231px;top:505px;width:1px;height:18px;background:#dcdde6"></div>
<div class="t" style="left:176.5px;top:510px;font-size:8.65px;color:#19ad6c">利润</div>
<div class="t" style="left:207.5px;top:510px;font-size:8.65px;color:#444">收入</div>
<div class="t" style="left:238px;top:510px;font-size:8.65px;color:#444">支出</div>
<div class="t" style="left:322.5px;top:619.3px;font-size:10.6px;color:#666">总计</div>
<div class="t" style="left:294.5px;top:641.5px;font-size:19.3px;color:#555">¥123,224</div>
<div class="lr" style="top:552.6px"><div class="d" style="background:#05ab62"></div><div class="m">1月</div><div class="s" style="left:36.6px"></div><div class="p" style="left:45.6px">36%</div><div class="v" style="left:124.4px;right:auto">¥4,544</div></div>
<div class="lr" style="top:581.8px"><div class="d" style="background:#4a90fb"></div><div class="m">2月</div><div class="s" style="left:36.6px"></div><div class="p" style="left:45.6px">20%</div><div class="v" style="left:124.4px;right:auto">¥4,544</div></div>
<div class="lr" style="top:611.0px"><div class="d" style="background:#f6c93c"></div><div class="m">3月</div><div class="s" style="left:36.6px"></div><div class="p" style="left:45.6px">16%</div><div class="v" style="left:124.4px;right:auto">¥4,544</div></div>
<div class="lr" style="top:640.3px"><div class="d" style="background:#f2674c"></div><div class="m">4月</div><div class="s" style="left:36.6px"></div><div class="p" style="left:45.6px">10%</div><div class="v" style="left:124.4px;right:auto">¥4,544</div></div>
<div class="lr" style="top:669.5px"><div class="d" style="background:#9a5be8"></div><div class="m">5月</div><div class="s" style="left:36.6px"></div><div class="p" style="left:45.6px">9%</div><div class="v" style="left:124.4px;right:auto">¥4,544</div></div>
<div class="lr" style="top:698.7px"><div class="d" style="background:#3ac6e6"></div><div class="m">其他</div><div class="s" style="left:40.3px"></div><div class="p" style="left:49.3px">9%</div><div class="v" style="left:124.4px;right:auto">¥4,544</div></div>



<!-- BOTTOM RIGHT -->
<div class="card" style="left:770px;top:449px;width:602px;height:319px">
  <div class="ctitle" style="top:12.2px">收支占比</div>
  <div class="abs" style="left:0;top:31px;width:602px;height:1px;background:#e6e7ee"></div>
</div>
<div class="tbl" style="left:782px;top:491.8px;width:579px;height:256px">
<div class="th" style="left:0;width:579px"></div>
<div class="cell" style="left:56.5px;top:0;height:28.8px;line-height:28.8px;color:#444;-webkit-text-stroke:0.2px #444">时间</div><svg style="position:absolute;left:79.5px;top:10.5px" width="6" height="9" viewBox="0 0 6 9"><path d="M3 0.5 L5.6 3.8 L0.4 3.8Z M3 8.5 L5.6 5.2 L0.4 5.2Z" fill="#c3c6d4"/></svg><div class="cell" style="left:189.5px;top:0;height:28.8px;line-height:28.8px;color:#444;-webkit-text-stroke:0.2px #444">收入(元)</div><svg style="position:absolute;left:230.5px;top:10.5px" width="6" height="9" viewBox="0 0 6 9"><path d="M3 0.5 L5.6 3.8 L0.4 3.8Z M3 8.5 L5.6 5.2 L0.4 5.2Z" fill="#c3c6d4"/></svg><div class="cell" style="left:335.0px;top:0;height:28.8px;line-height:28.8px;color:#444;-webkit-text-stroke:0.2px #444">支出(元)</div><svg style="position:absolute;left:376.5px;top:10.5px" width="6" height="9" viewBox="0 0 6 9"><path d="M3 0.5 L5.6 3.8 L0.4 3.8Z M3 8.5 L5.6 5.2 L0.4 5.2Z" fill="#c3c6d4"/></svg><div class="cell" style="left:483.5px;top:0;height:28.8px;line-height:28.8px;color:#444;-webkit-text-stroke:0.2px #444">盈亏(元)</div><svg style="position:absolute;left:522.0px;top:10.5px" width="6" height="9" viewBox="0 0 6 9"><path d="M3 0.5 L5.6 3.8 L0.4 3.8Z M3 8.5 L5.6 5.2 L0.4 5.2Z" fill="#c3c6d4"/></svg><div class="row" style="top:28.80px;width:579px;"></div><div class="cell" style="left:0;width:143.2px;text-align:center;top:28.80px;color:#333">2022年1月</div><div class="cell" style="left:143.2px;width:131.5px;text-align:right;top:28.80px;color:#11ad62">¥80000</div><div class="cell" style="left:287.2px;width:131.9px;text-align:right;top:28.80px;color:#f5333f">¥50000</div><div class="cell" style="left:431.6px;width:134.4px;text-align:right;top:28.80px;color:#333">¥300000</div><div class="row" style="top:56.90px;width:579px;"></div><div class="cell" style="left:0;width:143.2px;text-align:center;top:56.90px;color:#333">2022年2月</div><div class="cell" style="left:143.2px;width:131.5px;text-align:right;top:56.90px;color:#11ad62">¥100000</div><div class="cell" style="left:287.2px;width:131.9px;text-align:right;top:56.90px;color:#f5333f">¥100000</div><div class="cell" style="left:431.6px;width:134.4px;text-align:right;top:56.90px;color:#333">¥100000</div><div class="row" style="top:85.00px;width:579px;"></div><div class="cell" style="left:0;width:143.2px;text-align:center;top:85.00px;color:#333">2022年3月</div><div class="cell" style="left:143.2px;width:131.5px;text-align:right;top:85.00px;color:#11ad62">¥150000</div><div class="cell" style="left:287.2px;width:131.9px;text-align:right;top:85.00px;color:#f5333f">¥150000</div><div class="cell" style="left:431.6px;width:134.4px;text-align:right;top:85.00px;color:#333">¥150000</div><div class="row" style="top:113.10px;width:579px;"></div><div class="cell" style="left:0;width:143.2px;text-align:center;top:113.10px;color:#333">2022年4月</div><div class="cell" style="left:143.2px;width:131.5px;text-align:right;top:113.10px;color:#11ad62">¥180000</div><div class="cell" style="left:287.2px;width:131.9px;text-align:right;top:113.10px;color:#f5333f">¥180000</div><div class="cell" style="left:431.6px;width:134.4px;text-align:right;top:113.10px;color:#333">¥180000</div><div class="row" style="top:141.20px;width:579px;"></div><div class="cell" style="left:0;width:143.2px;text-align:center;top:141.20px;color:#333">2022年5月</div><div class="cell" style="left:143.2px;width:131.5px;text-align:right;top:141.20px;color:#11ad62">¥80000</div><div class="cell" style="left:287.2px;width:131.9px;text-align:right;top:141.20px;color:#f5333f">¥50000</div><div class="cell" style="left:431.6px;width:134.4px;text-align:right;top:141.20px;color:#333">¥300000</div><div class="row" style="top:169.30px;width:579px;"></div><div class="cell" style="left:0;width:143.2px;text-align:center;top:169.30px;color:#333">2022年6月</div><div class="cell" style="left:143.2px;width:131.5px;text-align:right;top:169.30px;color:#11ad62">¥100000</div><div class="cell" style="left:287.2px;width:131.9px;text-align:right;top:169.30px;color:#f5333f">¥100000</div><div class="cell" style="left:431.6px;width:134.4px;text-align:right;top:169.30px;color:#333">¥100000</div><div class="row" style="top:197.40px;width:579px;"></div><div class="cell" style="left:0;width:143.2px;text-align:center;top:197.40px;color:#333">2022年7月</div><div class="cell" style="left:143.2px;width:131.5px;text-align:right;top:197.40px;color:#11ad62">¥150000</div><div class="cell" style="left:287.2px;width:131.9px;text-align:right;top:197.40px;color:#f5333f">¥150000</div><div class="cell" style="left:431.6px;width:134.4px;text-align:right;top:197.40px;color:#333">¥150000</div><div class="row" style="top:225.50px;width:579px;background:#fafafa;"></div><div class="cell" style="left:0;width:143.2px;text-align:center;top:225.50px;color:#f5222d">Σ 合计:</div><div class="cell" style="left:143.2px;width:131.5px;text-align:right;top:225.50px;color:#11ad62">¥150000</div><div class="cell" style="left:287.2px;width:131.9px;text-align:right;top:225.50px;color:#f5333f">¥150000</div><div class="cell" style="left:431.6px;width:134.4px;text-align:right;top:225.50px;color:#333">¥150000</div><div class="vl" style="left:143.2px"></div><div class="vl" style="left:287.2px"></div><div class="vl" style="left:431.6px"></div>
</div>


</div></body></html>
